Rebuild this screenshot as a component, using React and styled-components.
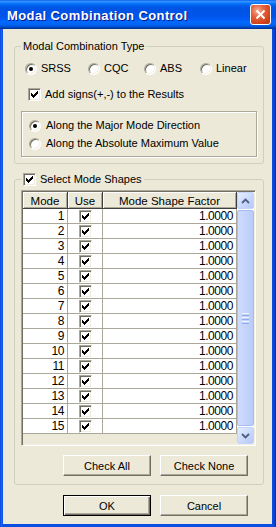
import React from "react";
import styled, { createGlobalStyle } from "styled-components";

const GlobalStyle = createGlobalStyle`
  html, body { margin: 0; padding: 0; background: #ffffff; }
  body { font-family: "Liberation Sans", Arial, sans-serif; }
`;

const Window = styled.div`
  width: 276px;
  height: 527px;
  box-sizing: border-box;
  display: flex;
  flex-direction: column;
  background: linear-gradient(to right, #0831d9 0, #166aee 1px, #0a4ee2 3px, #0a4ee2 272px, #0b45d8 274px, #002bb4 276px);
  overflow: hidden;
`;

const TitleBar = styled.div`
  height: 29px;
  flex: none;
  display: flex;
  align-items: center;
  justify-content: space-between;
  padding: 0 5px 0 7px;
  background: linear-gradient(
    to bottom,
    #0058ee 0%,
    #3a93ff 4%,
    #288eff 7%,
    #127dff 10%,
    #036ffc 14%,
    #0262ee 18%,
    #0057e5 24%,
    #0054e3 30%,
    #0055eb 56%,
    #005bf5 66%,
    #026afe 76%,
    #0062ef 86%,
    #0052d6 92%,
    #0040ab 96%,
    #003092 100%
  );
`;

const Title = styled.span`
  color: #ffffff;
  font: bold 13px "Liberation Sans", Arial, sans-serif;
  letter-spacing: 0.4px;
  text-shadow: 1px 1px 0 #0a1883;
  margin-top: 1px;
`;

const CloseButton = styled.div`
  width: 21px;
  height: 21px;
  box-sizing: border-box;
  border: 1px solid #ffffff;
  border-radius: 3px;
  display: flex;
  align-items: center;
  justify-content: center;
  background: radial-gradient(circle at 35% 30%, #f4b09a 0%, #e5643e 35%, #d2431c 70%, #b8360f 100%);
`;

const Body = styled.div`
  flex: 1;
  margin: 0 4px 4px 3px;
  background: #ece9d8;
  padding: 11px 8px 8px 11px;
  display: flex;
  flex-direction: column;
  font-size: 11px;
  color: #000000;
`;

const Group = styled.fieldset`
  margin: ${(p) => (p.$second ? "9px 0 0 0" : "0")};
  padding: ${(p) => (p.$second ? "2px 0 8px 0" : "0 0 6px 0")};
  border: 1px solid #d0d0bf;
  border-radius: 3px;
  min-width: 0;
  display: flex;
  flex-direction: column;
`;

const Legend = styled.legend`
  margin-left: 6px;
  padding: 0 2px;
  font-size: 11px;
  line-height: 13px;
  display: flex;
  align-items: center;
  gap: 4px;
`;

const RadioRow = styled.div`
  display: flex;
  margin: 9px 0 0 10px;
  height: 13px;
`;

const Option = styled.label`
  display: flex;
  align-items: center;
  gap: ${(p) => p.$gap || 4}px;
  width: ${(p) => (p.$w ? `${p.$w}px` : "auto")};
  line-height: 13px;
  white-space: nowrap;
`;

const Radio = styled.span`
  width: 12px;
  height: 12px;
  box-sizing: border-box;
  border-radius: 50%;
  background: #ffffff;
  border: 1px solid;
  border-color: #aca899 #ffffff #ffffff #aca899;
  box-shadow: inset 1px 1px 0 #716f64, inset -1px -1px 0 #f1efe2;
  display: flex;
  align-items: center;
  justify-content: center;
  flex: none;

  &::after {
    content: "";
    width: 4px;
    height: 4px;
    border-radius: 50%;
    background: ${(p) => (p.$on ? "#000000" : "transparent")};
  }
`;

const Box = styled.span`
  width: 13px;
  height: 13px;
  box-sizing: border-box;
  background: #ffffff;
  border: 1px solid;
  border-color: #aca899 #ffffff #ffffff #aca899;
  box-shadow: inset 1px 1px 0 #716f64, inset -1px -1px 0 #f1efe2;
  display: block;
  flex: none;
`;

const CheckRow = styled.div`
  display: flex;
  margin: 13px 0 0 13px;
`;

const SubBox = styled.div`
  margin: 10px 6px 0 6px;
  padding: 7px 0 6px 7px;
  border: 1px solid #aca899;
  box-shadow: inset 1px 1px 0 #ffffff, 1px 1px 0 #ffffff;
  display: flex;
  flex-direction: column;
  gap: 5px;
`;

const GridFrame = styled.div`
  margin: 2px 0 0 6px;
  width: 235px;
  height: 256px;
  box-sizing: border-box;
  border: 1px solid;
  border-color: #aca899 #ffffff #ffffff #aca899;
  box-shadow: inset 1px 1px 0 #716f64, inset -1px -1px 0 #f1efe2;
  padding: 1px;
  display: flex;
  background: #ece9d8;
`;

const Cells = styled.div`
  flex: 1;
  display: grid;
  grid-template-columns: 45px 35px 134px;
  grid-template-rows: 17px;
  grid-auto-rows: 15px;
  align-content: start;
`;

const HeadCell = styled.div`
  box-sizing: border-box;
  background: #ece9d8;
  border-right: 1px solid #404040;
  border-bottom: 1px solid #404040;
  box-shadow: inset 1px 1px 0 #ffffff, inset -1px -1px 0 #aca899;
  display: flex;
  align-items: center;
  justify-content: center;
  font-size: 11.5px;
  padding-top: 1px;
`;

const Cell = styled.div`
  box-sizing: border-box;
  background: #ffffff;
  border-right: 1px solid #aca899;
  border-bottom: 1px solid #aca899;
  display: flex;
  align-items: center;
  justify-content: ${(p) => p.$align || "flex-end"};
  padding: ${(p) => (p.$align === "center" ? "0" : "0 3px 0 0")};
  font-size: 12px;
  letter-spacing: -0.45px;
  line-height: 14px;
`;

const Scrollbar = styled.div`
  width: 17px;
  flex: none;
  display: flex;
  flex-direction: column;
  background: #fefefe;
`;

const ScrollButton = styled.div`
  height: 17px;
  flex: none;
  box-sizing: border-box;
  border: 1px solid #c5d3f8;
  border-radius: 2px;
  background: linear-gradient(135deg, #e6eefe 0%, #c9d8fc 55%, #b6c9f6 100%);
  display: flex;
  align-items: center;
  justify-content: center;
`;

const Thumb = styled.div`
  flex: 1;
  margin: 1px 0;
  box-sizing: border-box;
  border: 1px solid #a7bdf0;
  border-radius: 2px;
  background: linear-gradient(to right, #d0dcfd 0%, #c4d4fc 50%, #b9cbf8 100%);
  display: flex;
  flex-direction: column;
  align-items: center;
  justify-content: center;
  gap: 1px;
`;

const Grip = styled.span`
  width: 7px;
  height: 1px;
  background: ${(p) => (p.$dark ? "#8cabf2" : "#eef3fe")};
`;

const ButtonRow = styled.div`
  display: flex;
  justify-content: flex-end;
  gap: 9px;
  margin: ${(p) => p.$margin};
`;

const PushButton = styled.button`
  width: 88px;
  height: 21px;
  box-sizing: border-box;
  padding: 0;
  background: #ece9d8;
  font: 11px "Liberation Sans", Arial, sans-serif;
  color: #000000;
  border: 1px solid;
  border-color: ${(p) => (p.$default ? "#000000" : "#ffffff #716f64 #716f64 #ffffff")};
  box-shadow: ${(p) =>
    p.$default
      ? "inset 1px 1px 0 #ffffff, inset -1px -1px 0 #716f64, inset -2px -2px 0 #aca899"
      : "inset -1px -1px 0 #aca899"};
`;

const CheckMark = () => (
  <svg width="11" height="11" viewBox="1 1 11 11" shapeRendering="crispEdges">
    <path
      fill="#000"
      d="M9 3h1v1h-1z M8 4h2v1h-2z M3 5h1v1h-1z M7 5h3v1h-3z M3 6h2v1h-2z M6 6h3v1h-3z M3 7h5v1h-5z M4 8h3v1h-3z M5 9h1v1h-1z"
    />
  </svg>
);

const CheckBox = ({ on }) => <Box>{on && <CheckMark />}</Box>;

const Chevron = ({ up }) => (
  <svg width="9" height="6" viewBox="0 0 9 6">
    <path
      d={up ? "M1 5 L4.5 1.5 L8 5" : "M1 1 L4.5 4.5 L8 1"}
      fill="none"
      stroke="#4d6185"
      strokeWidth="1.8"
    />
  </svg>
);

const rows = Array.from({ length: 15 }, (_, i) => ({ mode: i + 1, use: true, factor: "1.0000" }));

export default function App() {
  return (
    <>
      <GlobalStyle />
      <Window>
        <TitleBar>
          <Title>Modal Combination Control</Title>
          <CloseButton>
            <svg width="11" height="11" viewBox="0 0 11 11">
              <path d="M1.5 1.5 L9.5 9.5 M9.5 1.5 L1.5 9.5" stroke="#fff" strokeWidth="2" />
            </svg>
          </CloseButton>
        </TitleBar>

        <Body>
          <Group>
            <Legend>Modal Combination Type</Legend>
            <RadioRow>
              <Option $w={63}>
                <Radio $on />
                SRSS
              </Option>
              <Option $w={56}>
                <Radio />
                CQC
              </Option>
              <Option $w={56}>
                <Radio />
                ABS
              </Option>
              <Option>
                <Radio />
                Linear
              </Option>
            </RadioRow>
            <CheckRow>
              <Option>
                <CheckBox on />
                Add signs(+,-) to the Results
              </Option>
            </CheckRow>
            <SubBox>
              <Option $gap={5}>
                <Radio $on />
                Along the Major Mode Direction
              </Option>
              <Option $gap={5}>
                <Radio />
                Along the Absolute Maximum Value
              </Option>
            </SubBox>
          </Group>

          <Group $second>
            <Legend>
              <CheckBox on />
              Select Mode Shapes
            </Legend>
            <GridFrame>
              <Cells>
                <HeadCell>Mode</HeadCell>
                <HeadCell>Use</HeadCell>
                <HeadCell>Mode Shape Factor</HeadCell>
                {rows.map((r) => (
                  <React.Fragment key={r.mode}>
                    <Cell>{r.mode}</Cell>
                    <Cell $align="center">
                      <CheckBox on={r.use} />
                    </Cell>
                    <Cell>{r.factor}</Cell>
                  </React.Fragment>
                ))}
              </Cells>
              <Scrollbar>
                <ScrollButton>
                  <Chevron up />
                </ScrollButton>
                <Thumb>
                  <Grip />
                  <Grip $dark />
                  <Grip />
                  <Grip $dark />
                  <Grip />
                  <Grip $dark />
                </Thumb>
                <ScrollButton>
                  <Chevron />
                </ScrollButton>
              </Scrollbar>
            </GridFrame>
            <ButtonRow $margin="9px 15px 0 0">
              <PushButton>Check All</PushButton>
              <PushButton>Check None</PushButton>
            </ButtonRow>
          </Group>

          <ButtonRow $margin="10px 16px 0 0">
            <PushButton $default>OK</PushButton>
            <PushButton>Cancel</PushButton>
          </ButtonRow>
        </Body>
      </Window>
    </>
  );
}
